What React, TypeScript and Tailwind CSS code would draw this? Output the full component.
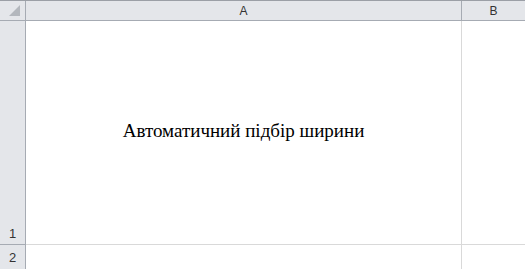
export default function App() {
  const hdr = 'bg-[#e4e6ea] text-[#333] text-[12px] flex items-center justify-center'
  return (
    <div className="w-[525px] h-[269px] overflow-hidden bg-white border-t border-[#9b9fa6] font-['Liberation_Sans',sans-serif]">
      {/* column header row */}
      <div className="flex h-[20px] border-b border-[#a6abb3]">
        <div className="relative w-[26px] shrink-0 bg-[#e4e6ea] border-r border-[#a6abb3]">
          <div className="absolute right-[5px] bottom-[4px] w-0 h-0 border-l-[11px] border-l-transparent border-b-[11px] border-b-[#b3b7bd]" />
        </div>
        <div className={`${hdr} w-[436px] shrink-0 border-r border-[#a6abb3]`}>A</div>
        <div className={`${hdr} flex-1`}>B</div>
      </div>
      {/* row 1 */}
      <div className="flex h-[224px] border-b border-[#d9d9d9]">
        <div className="w-[26px] shrink-0 bg-[#e4e6ea] border-r border-[#a6abb3] border-b border-b-[#a6abb3] -mb-px flex items-end justify-center pb-[1px] text-[13px] text-[#333]">
          1
        </div>
        <div className="w-[436px] shrink-0 border-r border-[#d9d9d9] flex items-center justify-center font-['Liberation_Serif',serif] text-[19px] text-black pb-[2px]">
          Автоматичний підбір ширини
        </div>
        <div className="flex-1" />
      </div>
      {/* row 2 */}
      <div className="flex h-[25px]">
        <div className="w-[26px] shrink-0 bg-[#e4e6ea] border-r border-[#a6abb3] flex items-end justify-center pb-[3px] text-[13px] text-[#333]">
          2
        </div>
        <div className="w-[436px] shrink-0 border-r border-[#d9d9d9]" />
        <div className="flex-1" />
      </div>
    </div>
  )
}
